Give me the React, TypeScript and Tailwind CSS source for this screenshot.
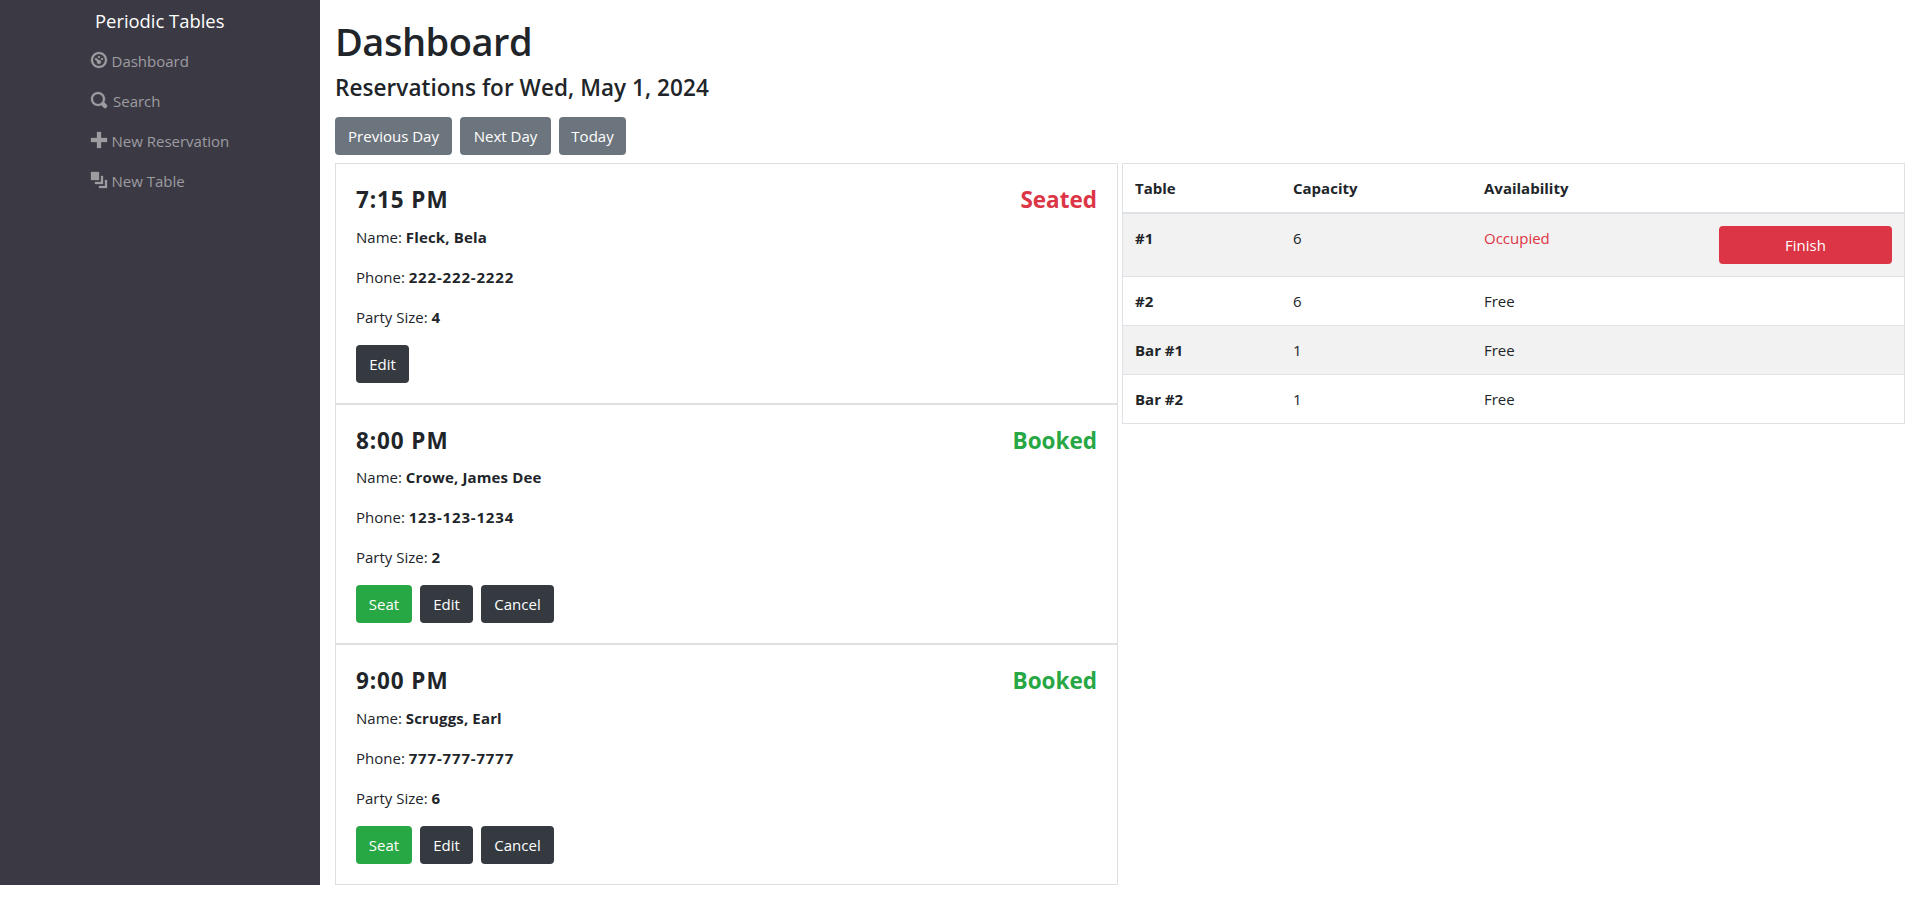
import type { ReactNode } from "react";

const icons = {
  dashboard:
    "M4 0c-2.2 0-4 1.8-4 4s1.8 4 4 4 4-1.8 4-4-1.8-4-4-4zm0 1c1.66 0 3 1.34 3 3s-1.34 3-3 3-3-1.34-3-3 1.34-3 3-3zm0 1c-.28 0-.5.22-.5.5s.22.5.5.5.5-.22.5-.5-.22-.5-.5-.5zm-1.66 1a.5.5 0 0 0-.19.84l.91.91c-.02.08-.06.16-.06.25 0 .55.45 1 1 1s1-.45 1-1-.45-1-1-1c-.09 0-.17.04-.25.06l-.91-.91a.5.5 0 0 0-.44-.16.5.5 0 0 0-.06 0zm3.16 0c-.28 0-.5.22-.5.5s.22.5.5.5.5-.22.5-.5-.22-.5-.5-.5z",
  search:
    "M3.5 0c-1.93 0-3.5 1.57-3.5 3.5s1.57 3.5 3.5 3.5c.59 0 1.17-.14 1.66-.41a1 1 0 0 0 .13.13l1 1a1.02 1.02 0 1 0 1.44-1.44l-1-1a1 1 0 0 0-.16-.13c.27-.49.44-1.06.44-1.66 0-1.93-1.55-3.5-3.5-3.5zm0 1c1.39 0 2.5 1.11 2.5 2.5 0 .66-.24 1.27-.66 1.72-.01.01-.02.02-.03.03a1 1 0 0 0-.13.13c-.44.4-1.04.63-1.69.63-1.39 0-2.5-1.11-2.5-2.5s1.11-2.5 2.5-2.5z",
  plus: "M3 0v3h-3v2h3v3h2v-3h3v-2h-3v-3h-2z",
  layers: "M0 0v4h4v-4h-4zm5 2v3h-3v1h4v-4h-1zm2 2v3h-3v1h4v-4h-1z",
};

const navItems = [
  { icon: icons.dashboard, label: "Dashboard", gap: "gap-[5px]" },
  { icon: icons.search, label: "Search", gap: "gap-[6.5px]" },
  { icon: icons.plus, label: "New Reservation", gap: "gap-[5px]" },
  { icon: icons.layers, label: "New Table", gap: "gap-[5px]" },
];

const reservations = [
  { time: "7:15 PM", status: "Seated", name: "Fleck, Bela", phone: "222-222-2222", size: 4 },
  { time: "8:00 PM", status: "Booked", name: "Crowe, James Dee", phone: "123-123-1234", size: 2 },
  { time: "9:00 PM", status: "Booked", name: "Scruggs, Earl", phone: "777-777-7777", size: 6 },
];

const tables = [
  { name: "#1", capacity: 6, occupied: true },
  { name: "#2", capacity: 6, occupied: false },
  { name: "Bar #1", capacity: 1, occupied: false },
  { name: "Bar #2", capacity: 1, occupied: false },
];

function Button({ className, children }: { className: string; children: ReactNode }) {
  return (
    <button type="button" className={`h-[38px] rounded text-center text-white ${className}`}>
      {children}
    </button>
  );
}

function Field({ label, value, tracking = "" }: { label: string; value: string | number; tracking?: string }) {
  return (
    <p className="mb-4">
      {label}: <strong className={`font-bold ${tracking}`}>{value}</strong>
    </p>
  );
}

export default function App() {
  return (
    <div className="flex h-[919px] items-start overflow-hidden bg-white font-['Open_Sans',sans-serif] text-[15px] leading-6 text-[#212529]">
      <nav className="h-[885px] w-80 shrink-0 bg-[#3b3a44] pl-[90.5px]">
        <div className="pt-[7px] pl-[4.5px] text-[18.4px] leading-[27px] text-white">Periodic Tables</div>
        <ul className="pt-[7px] text-[#9d9ca1]">
          {navItems.map((item) => (
            <li key={item.label} className={`flex h-10 items-center ${item.gap}`}>
              <svg viewBox="0 0 8 8" className="mb-0.5 size-4 overflow-visible fill-current stroke-current stroke-[0.15]">
                <path d={item.icon} />
              </svg>
              <span>{item.label}</span>
            </li>
          ))}
        </ul>
      </nav>

      <main className="flex-1 pr-[15px] pl-[15px]">
        <h1 className="pt-[17px] text-[38px] leading-[48px] font-semibold tracking-[-0.013em]">Dashboard</h1>
        <h4 className="pt-2 text-[22.5px] leading-[29px] font-semibold tracking-[0.003em]">
          Reservations for Wed, May 1, 2024
        </h4>
        <div className="flex gap-2 pt-[15px] pb-2">
          <Button className="w-[117px] bg-[#6c757d]">Previous Day</Button>
          <Button className="w-[91px] bg-[#6c757d]">Next Day</Button>
          <Button className="w-[67px] bg-[#6c757d]">Today</Button>
        </div>

        <div className="flex items-start gap-1">
          <section className="w-[783px]">
            {reservations.map((r) => (
              <article key={r.time} className="h-[240.6px] border border-[#dfdfdf] px-5 pt-[22px]">
                <div className="mb-[10px] flex justify-between text-[22.5px] leading-[28.8px] font-bold">
                  <h4 className="tracking-[0.04em]">{r.time}</h4>
                  <h4 className={r.status === "Seated" ? "text-[#dc3545]" : "text-[#28a745]"}>{r.status}</h4>
                </div>
                <Field label="Name" value={r.name} tracking="tracking-[0.01em]" />
                <Field label="Phone" value={r.phone} tracking="tracking-[0.055em]" />
                <Field label="Party Size" value={r.size} />
                <div className="flex gap-2">
                  {r.status === "Booked" && <Button className="w-14 bg-[#28a745]">Seat</Button>}
                  <Button className="w-[53px] bg-[#343a40]">Edit</Button>
                  {r.status === "Booked" && <Button className="w-[73px] bg-[#343a40]">Cancel</Button>}
                </div>
              </article>
            ))}
          </section>

          <table className="w-[783px] table-fixed border-separate border-spacing-0 border border-[#dee2e6] text-left">
            <colgroup>
              <col className="w-[158px]" />
              <col className="w-[191px]" />
              <col className="w-[235px]" />
              <col />
            </colgroup>
            <thead>
              <tr>
                {["Table", "Capacity", "Availability", ""].map((heading) => (
                  <th key={heading} className="border-b-2 border-[#dee2e6] p-3 font-bold">
                    {heading}
                  </th>
                ))}
              </tr>
            </thead>
            <tbody className="[&>tr+tr>*]:border-t [&>tr>*]:border-[#dee2e6]">
              {tables.map((t) => (
                <tr key={t.name} className="align-top odd:bg-[#f2f2f2]">
                  <th className="p-3 font-bold">{t.name}</th>
                  <td className="p-3">{t.capacity}</td>
                  <td className={t.occupied ? "p-3 text-[#dc3545]" : "p-3"}>{t.occupied ? "Occupied" : "Free"}</td>
                  <td className={t.occupied ? "p-3" : ""}>
                    {t.occupied && <Button className="block w-full bg-[#dc3545]">Finish</Button>}
                  </td>
                </tr>
              ))}
            </tbody>
          </table>
        </div>
      </main>
    </div>
  );
}
